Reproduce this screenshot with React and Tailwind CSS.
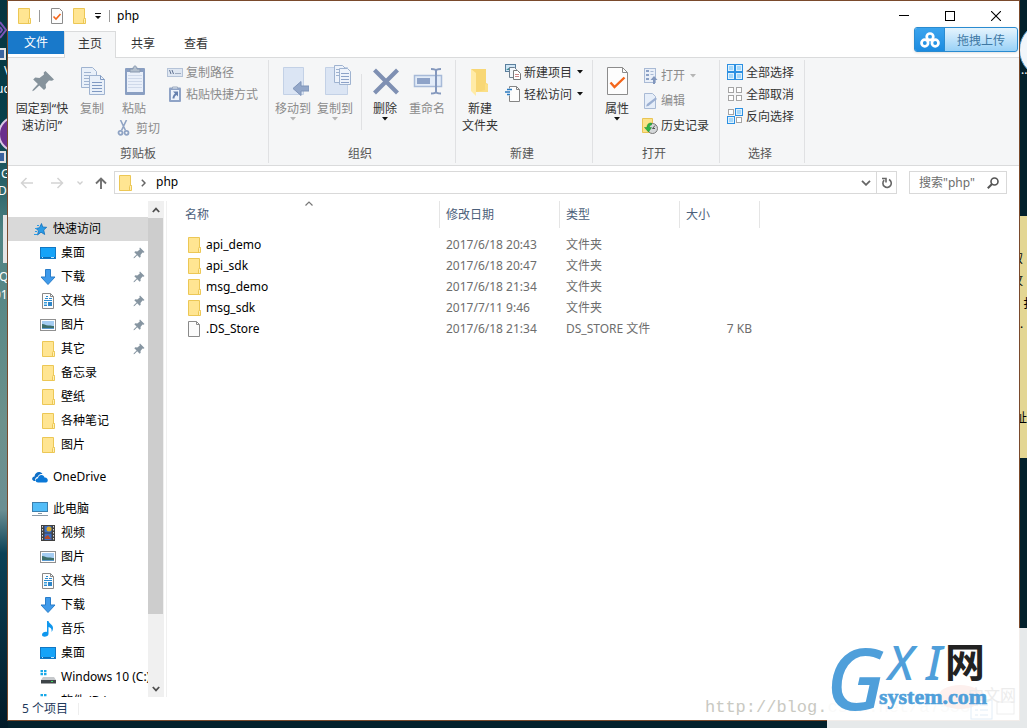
import React from "react";

const FONT = "font-['Noto_Sans','Noto_Sans_CJK_SC',sans-serif]";

/* ---------- shared icons ---------- */

function FolderIcon() {
  return (
    <svg width="16" height="16" viewBox="0 0 16 16" className="shrink-0" aria-hidden="true">
      <path d="M2.5 .5h11v10h1v5H2.5z" fill="#ffe592" stroke="#ecc755" />
      <path d="M12.5 15V11.5l1-1.5 1 1.5V15" fill="#fff0b5" stroke="#ecc755" />
    </svg>
  );
}

function PageIcon() {
  return (
    <svg width="16" height="16" viewBox="0 0 16 16" className="shrink-0" aria-hidden="true">
      <path d="M2.5 .5h8l3 3v12h-11z" fill="#fbfbfb" stroke="#8a8a8a" />
      <path d="M10.5 .5v3h3" fill="none" stroke="#8a8a8a" />
    </svg>
  );
}

function CheckPage({ large }) {
  return (
    <svg width={large ? 32 : 16} height={large ? 32 : 16} viewBox={large ? "0 0 32 32" : "0 0 16 16"} aria-hidden="true">
      {large ? (
        <g fill="none">
          <path d="M6.500 3.500h15l5 5v22h-20z" fill="#fdfdfd" stroke="#8c8c8c" />
          <path d="M21.500 3.500v5h5" stroke="#8c8c8c" />
          <path d="M9.500 18.500l4 4.500 10-9.500" stroke="#f4661b" strokeWidth="2.400" />
        </g>
      ) : (
        <g fill="none">
          <path d="M2.500 .5h8l3 3v12h-11z" fill="#fdfdfd" stroke="#8c8c8c" />
          <path d="M4.500 8.500l2.500 2.500 4.500-5" stroke="#f4661b" strokeWidth="1.600" />
        </g>
      )}
    </svg>
  );
}

function PinSmall() {
  return (
    <svg width="12" height="12" viewBox="0 0 12 12" aria-hidden="true">
      <path d="M7 .5l4.500 4.500-1 .8-1-.2-2 2.300.2 1.800-1 1L4.200 8.200 1.500 11l-1 .3.3-1L3.600 7.600 1.300 5.300l1-1 2 .2L6.800 2.500 6.400 1.300z" fill="#8695a1" />
    </svg>
  );
}

function Caret({ className = "" }) {
  return (
    <svg width="6" height="4" viewBox="0 0 6 4" className={className} aria-hidden="true">
      <path d="M0 0h6L3 3.500z" fill="currentColor" />
    </svg>
  );
}

/* ---------- ribbon icons ---------- */

const PinBig = () => (
  <svg width="32" height="32" viewBox="0 0 32 32" aria-hidden="true">
    <path d="M19.500 7l8.500 8.500-2 1.300-3-.3-3.300 3.800.3 3.700-2 2-4.700-4.500L8 26.500l-1.800.7.7-1.800 5-5.300-4.700-4.600 2-2 4.300.5L18 10.500l-.3-2z" fill="#86939c" />
  </svg>
);

const CopyIcon = () => (
  <svg width="32" height="32" viewBox="0 0 32 32" aria-hidden="true" stroke="#9fb3d0">
    <path d="M5.500 3.500h11l4 4v16h-15z" fill="#e9f0f9" />
    <path d="M8 8.500h7M8 11.500h7M8 14.500h7M8 17.500h7M8 20.500h7" fill="none" />
    <path d="M13.500 11.500h11l4 4v15h-15z" fill="#e9f0f9" />
    <path d="M24.500 11.500v4h4M16 18.500h10M16 21.500h10M16 24.500h10M16 27.500h10" fill="none" stroke="#7f99c2" />
  </svg>
);

const PasteIcon = () => (
  <svg width="32" height="32" viewBox="0 0 32 32" aria-hidden="true">
    <rect x="7" y="4" width="20" height="27" rx="1" fill="#8a9fc2" />
    <rect x="9" y="8" width="16" height="20" fill="#eaf0fa" />
    <path d="M10 11.500h14M10 14.500h14M10 17.500h14M10 20.500h14M10 23.500h14" stroke="#cfd9ea" />
    <path d="M12 8V5h3c0-4 4-4 4 0h3v3z" fill="#b3bfcd" stroke="#8797ae" />
  </svg>
);

const CutIcon = () => (
  <svg width="16" height="16" viewBox="0 0 16 16" fill="none" stroke="#8fa3c4" aria-hidden="true">
    <path d="M3.500 0l5 10.500M9.500 0L4.500 10.500" strokeWidth="1.600" />
    <circle cx="3.500" cy="12.800" r="2" strokeWidth="1.800" />
    <circle cx="9.500" cy="12.800" r="2" strokeWidth="1.800" />
  </svg>
);

const PathIcon = () => (
  <svg width="16" height="16" viewBox="0 0 16 16" aria-hidden="true">
    <rect x=".5" y="4.500" width="15" height="8" fill="#dfe7f2" stroke="#b5c3d8" />
    <path d="M2.500 6l1.500 4M5 6l1.500 4" stroke="#5f7191" />
    <path d="M8.500 9.500h1M10.500 9.500h1M12.500 9.500h1" stroke="#5f7191" />
  </svg>
);

const ShortcutIcon = () => (
  <svg width="16" height="16" viewBox="0 0 16 16" aria-hidden="true">
    <rect x="2" y="1.500" width="12" height="14.500" rx="1" fill="#8fa3c6" />
    <rect x="4" y="4" width="8" height="10" fill="#eef3fb" />
    <path d="M5.500 2.500V1h5v1.500" fill="#dfe6ee" stroke="#9aa9bf" />
    <path d="M6 5.500h5v5L9.500 9C8 10 7.500 11 7.500 12.500H5.500C5.500 10.500 6.500 8.500 8 7.500z" fill="#6680ae" />
  </svg>
);

const MoveIcon = () => (
  <svg width="32" height="32" viewBox="0 0 32 32" aria-hidden="true">
    <path d="M6.500 3.500h20v27h-20z" fill="#dbe5f4" stroke="#c3d1e6" />
    <path d="M16 24.500l8-7v4.500h8v5h-8v4.500z" fill="#93a7c9" stroke="#7f94b8" />
  </svg>
);

const CopyToIcon = () => (
  <svg width="32" height="32" viewBox="0 0 32 32" aria-hidden="true">
    <path d="M6.500 3.500h22v27h-22z" fill="#dbe5f4" stroke="#c3d1e6" />
    <path d="M15.500 1.500h8l3 3v14h-11z" fill="#eef3fb" stroke="#9fb3d0" />
    <path d="M17 5.500h5M17 8.500h5M17 11.500h5" stroke="#9fb3d0" />
    <path d="M20.500 4.500h8l3 3v13h-11z" fill="#eef3fb" stroke="#9fb3d0" />
    <path d="M22 9.500h8M22 12.500h8M22 15.500h8M22 18.500h8" stroke="#8ca2c8" />
  </svg>
);

const DeleteIcon = () => (
  <svg width="32" height="32" viewBox="0 0 32 32" aria-hidden="true">
    <path d="M5.500 6l23 23M28.500 6l-23 23" stroke="#7f90b3" strokeWidth="4.200" />
  </svg>
);

const RenameIcon = () => (
  <svg width="32" height="32" viewBox="0 0 32 32" aria-hidden="true">
    <rect x="3.500" y="11.500" width="27" height="11" fill="#e3ecf8" stroke="#a7bad8" strokeWidth="1.500" />
    <rect x="6" y="14" width="13" height="6" fill="#8ea3c8" />
    <path d="M25 6v22M20 5c3.500 0 5 .5 5 2 0-1.500 1.500-2 5-2M20 29.500c3.500 0 5-.5 5-2 0 1.500 1.500 2 5 2" fill="none" stroke="#8498bd" strokeWidth="2" />
  </svg>
);

const NewFolderIcon = () => (
  <svg width="32" height="32" viewBox="0 0 32 32" aria-hidden="true">
    <path d="M7 5h15v14l2 1v8H11z" fill="#f8d775" />
    <path d="M7 5l5 4v23l-5-5z" fill="#ffeba7" />
    <path d="M12 28h12v-7l-2-2-1 2v5z" fill="#fbdf86" />
  </svg>
);

const NewItemIcon = () => (
  <svg width="16" height="16" viewBox="0 0 16 16" aria-hidden="true">
    <rect x=".5" y=".5" width="10" height="7" fill="#cfe6f6" stroke="#5a7f9d" />
    <path d="M1 6l4-3 3 3" fill="#3f8f9a" />
    <path d="M4.500 3.500h5l2 2v8h-7z" fill="#f3f7fb" stroke="#6e7f8f" />
    <path d="M8.500 6.500h4l3 3v6h-7z" fill="#fff" stroke="#7a7a7a" />
    <path d="M10 10.500h4M10 12.500h4" stroke="#c88" />
  </svg>
);

const EasyIcon = () => (
  <svg width="16" height="16" viewBox="0 0 16 16" aria-hidden="true">
    <path d="M4.500 .5h7l3 3v12h-10z" fill="#fdfdfd" stroke="#858585" />
    <path d="M11.500 .5v3h3" fill="none" stroke="#858585" />
    <path d="M3 2.500h4v7H3z" fill="#f9fafb" />
    <path d="M2 3.500h5M0 6h5M2 8.500h3" stroke="#2a7ac0" strokeWidth="1.300" />
  </svg>
);

const OpenIcon = () => (
  <svg width="16" height="16" viewBox="0 0 16 16" aria-hidden="true">
    <rect x="2.500" y=".5" width="11" height="14" fill="#e9eff8" stroke="#a9bad5" />
    <path d="M4 3h3M4 7h3M4 11h3" stroke="#8ba1c6" strokeWidth="2" />
    <path d="M8.500 3.500h3M8.500 6.500h3" stroke="#a9bad5" />
    <path d="M11 16v-4H8.500L12 8l3.500 4H13v4z" fill="#8297bd" />
  </svg>
);

const EditIcon = () => (
  <svg width="16" height="16" viewBox="0 0 16 16" aria-hidden="true">
    <path d="M2.500 .5h8l3 3v12h-11z" fill="#e6eef9" stroke="#a9bad5" />
    <path d="M4 13.500l1-2.500 8.500-6.500 1.500 1.500L6.500 13z" fill="#9cb0d2" />
  </svg>
);

const HistoryIcon = () => (
  <svg width="16" height="16" viewBox="0 0 16 16" aria-hidden="true">
    <path d="M.5 .5h10v14H.5z" fill="#fbe28a" stroke="#e9c455" />
    <circle cx="10.500" cy="10.500" r="5" fill="#d5d8da" stroke="#787878" />
    <path d="M10.500 10.500L13 7.500M10.500 10.500h2.500" stroke="#555" />
    <path d="M9.500 5C6 5 5 7 5 9.500H2.500L6.500 14l3-4.500H7.500c0-1.500.5-2.500 2-2.500z" fill="#2fb344" stroke="#188a2d" strokeWidth=".5" />
  </svg>
);

function TilesIcon({ on }) {
  const spots = [[0, 0], [8, 0], [0, 8], [8, 8]];
  return (
    <svg width="16" height="16" viewBox="0 0 16 16" aria-hidden="true">
      {spots.map(([x, y], i) =>
        on.includes(i) ? (
          <g key={i}>
            <rect x={x + 0.5} y={y + 0.5} width="7" height="7" fill="#dff1fd" stroke="#2c90e2" />
            <rect x={x + 2} y={y + 2} width="4" height="4" fill="#a6d8fa" />
          </g>
        ) : (
          <rect key={i} x={x + 1.5} y={y + 1.5} width="5" height="5" fill="#fff" stroke="#a5a5a5" />
        )
      )}
    </svg>
  );
}

/* ---------- ribbon ---------- */

function BigButton({ icon, lines, caret, disabled, className }) {
  return (
    <button
      type="button"
      disabled={disabled}
      className={`flex flex-col items-center pt-1.5 leading-[17px] whitespace-nowrap ${disabled ? "text-[#8b8b8b]" : "text-[#333]"} ${className}`}
    >
      <span className="mb-1 block h-8 w-8">{icon}</span>
      {lines.map((line) => (
        <span key={line} className="block">{line}</span>
      ))}
      {caret && <Caret className={disabled ? "text-[#b5b5b5]" : "text-[#111]"} />}
    </button>
  );
}

function SmallButton({ icon, label, caret, disabled, className = "h-[22px]" }) {
  return (
    <button
      type="button"
      disabled={disabled}
      className={`flex items-center gap-[3px] whitespace-nowrap leading-[17px] ${disabled ? "text-[#8b8b8b]" : "text-[#333]"} ${className}`}
    >
      {icon}
      <span>{label}</span>
      {caret && <Caret className={disabled ? "ml-0.5 text-[#b5b5b5]" : "ml-0.5 text-[#111]"} />}
    </button>
  );
}

function Group({ title, children, className }) {
  return (
    <section aria-label={title} className={`my-0.5 flex shrink-0 flex-col border-r border-[#e0e1e3] ${className}`}>
      <div className="-mt-0.5 flex flex-1 items-start">{children}</div>
      <h2 className="pr-1 pb-px text-center leading-[17px] text-[#555]">{title}</h2>
    </section>
  );
}

function Ribbon() {
  return (
    <div className="flex h-[108px] shrink-0 overflow-hidden border-b border-[#dadbdc] bg-[#f5f6f7]">
      <Group title="剪贴板" className="w-[261px] pl-1">
        <BigButton className="w-[60px]" icon={<PinBig />} lines={["固定到“快", "速访问”"]} />
        <BigButton className="w-10" icon={<CopyIcon />} lines={["复制"]} disabled />
        <div className="w-[55px]">
          <BigButton className="w-11" icon={<PasteIcon />} lines={["粘贴"]} disabled />
          <SmallButton className="ml-[5px] h-[22px]" icon={<CutIcon />} label="剪切" disabled />
        </div>
        <div className="pt-[3px]">
          <SmallButton icon={<PathIcon />} label="复制路径" disabled />
          <SmallButton icon={<ShortcutIcon />} label="粘贴快捷方式" disabled />
        </div>
      </Group>
      <Group title="组织" className="w-[187px]">
        <BigButton className="ml-[3px] w-[42px]" icon={<MoveIcon />} lines={["移动到"]} caret disabled />
        <BigButton className="w-[42px]" icon={<CopyToIcon />} lines={["复制到"]} caret disabled />
        <div className="mt-4 mr-1 ml-[5px] h-14 w-px bg-[#e0e1e3]" />
        <BigButton className="w-[38px]" icon={<DeleteIcon />} lines={["删除"]} caret />
        <BigButton className="w-[46px]" icon={<RenameIcon />} lines={["重命名"]} disabled />
      </Group>
      <Group title="新建" className="w-[137px]">
        <BigButton className="w-12" icon={<NewFolderIcon />} lines={["新建", "文件夹"]} />
        <div className="pt-[3px] pl-px">
          <SmallButton icon={<NewItemIcon />} label="新建项目" caret />
          <SmallButton icon={<EasyIcon />} label="轻松访问" caret />
        </div>
      </Group>
      <Group title="打开" className="w-[127px]">
        <BigButton className="w-12" icon={<CheckPage large />} lines={["属性"]} caret />
        <div className="pt-[5px] pl-px">
          <SmallButton className="h-[25px]" icon={<OpenIcon />} label="打开" caret disabled />
          <SmallButton className="h-[25px]" icon={<EditIcon />} label="编辑" disabled />
          <SmallButton className="h-[25px]" icon={<HistoryIcon />} label="历史记录" />
        </div>
      </Group>
      <Group title="选择" className="w-[85px]">
        <div className="pt-[3px] pl-[7px]">
          <SmallButton icon={<TilesIcon on={[0, 1, 2, 3]} />} label="全部选择" />
          <SmallButton icon={<TilesIcon on={[]} />} label="全部取消" />
          <SmallButton icon={<TilesIcon on={[1, 2]} />} label="反向选择" />
        </div>
      </Group>
    </div>
  );
}

/* ---------- title bar and tabs ---------- */

function TitleBar() {
  return (
    <header className="flex h-[30px] shrink-0 items-center">
      <div className="flex flex-1 items-center pl-2">
        <FolderIcon />
        <span className="ml-[7px] h-3 w-px bg-[#9a9a9a]" />
        <button type="button" aria-label="属性" className="ml-[9px]"><CheckPage /></button>
        <button type="button" aria-label="新建文件夹" className="ml-[6px]"><FolderIcon /></button>
        <button type="button" aria-label="自定义快速访问工具栏" className="ml-[7px]">
          <svg width="8" height="8" viewBox="0 0 8 8" aria-hidden="true">
            <path d="M1 1h6v1H1zM1 4h6L4 7z" fill="#111" />
          </svg>
        </button>
        <span className="ml-[7px] h-3 w-px bg-[#9a9a9a]" />
        <h1 className="ml-[7px] text-black">php</h1>
      </div>
      <div className="flex h-full">
        <button type="button" aria-label="最小化" className="flex w-[46px] items-center justify-center">
          <svg width="10" height="10" viewBox="0 0 10 10"><path d="M0 4.500h10" stroke="#000" /></svg>
        </button>
        <button type="button" aria-label="最大化" className="flex w-[46px] items-center justify-center">
          <svg width="10" height="10" viewBox="0 0 10 10"><rect x=".5" y=".5" width="9" height="9" fill="none" stroke="#000" /></svg>
        </button>
        <button type="button" aria-label="关闭" className="flex w-[46px] items-center justify-center">
          <svg width="10" height="10" viewBox="0 0 10 10"><path d="M0 0l10 10M10 0L0 10" stroke="#000" strokeWidth="1.100" /></svg>
        </button>
      </div>
    </header>
  );
}

function Tabs() {
  return (
    <nav aria-label="功能区" className="flex h-[27px] shrink-0 text-[#333]">
      <div className="border-b border-[#dadbdc]">
        <button type="button" className="h-[23px] w-14 bg-[#1979ca] text-white">文件</button>
      </div>
      <button type="button" className="w-[52px] border-x border-t border-[#dadbdc] bg-[#f5f6f7] pb-0.5">主页</button>
      <button type="button" className="w-[54px] border-b border-[#dadbdc] pb-px">共享</button>
      <button type="button" className="w-[52px] border-b border-[#dadbdc] pb-px">查看</button>
      <div className="flex-1 border-b border-[#dadbdc]" />
    </nav>
  );
}

function UploadButton() {
  return (
    <button
      type="button"
      className="absolute top-[26px] right-px flex h-[25px] w-[104px] overflow-hidden rounded-[3px] border border-[#2a8bd0] bg-linear-to-b from-[#e6f4fd] to-[#98d1f7] text-[#3d77a3] shadow-sm"
    >
      <span className="flex h-full w-[30px] items-center justify-center border-r border-[#2a8bd0] bg-linear-to-b from-[#3aa4ee] to-[#1b8be0]">
        <svg width="20" height="16" viewBox="0 0 20 16" fill="none" stroke="#fff" strokeWidth="2.700" aria-hidden="true">
          <circle cx="10" cy="4.800" r="3.300" />
          <circle cx="4.800" cy="11" r="3.300" />
          <circle cx="15.200" cy="11" r="3.300" />
          <path d="M7.500 9l2.500-1.500L12.500 9" strokeWidth="1.800" />
        </svg>
      </span>
      <span className="flex h-full flex-1 items-center justify-center pt-0.5">拖拽上传</span>
    </button>
  );
}

/* ---------- address bar ---------- */

function AddressBar() {
  return (
    <div className="flex h-[35px] shrink-0 items-start pt-[5px] pr-3">
      <div className="flex h-[23px] w-[106px] items-center">
        <button type="button" aria-label="后退" className="ml-3 w-[14px]">
          <svg width="14" height="12" viewBox="0 0 14 12" fill="none" stroke="#d3d3d3" strokeWidth="1.500"><path d="M13 6H2M6.500 1L1.500 6l5 5" /></svg>
        </button>
        <button type="button" aria-label="前进" className="ml-4 w-[14px]">
          <svg width="14" height="12" viewBox="0 0 14 12" fill="none" stroke="#d3d3d3" strokeWidth="1.500"><path d="M1 6h11M7.500 1l5 5-5 5" /></svg>
        </button>
        <button type="button" aria-label="最近浏览的位置" className="ml-[13px] w-[6px]">
          <svg width="6" height="4" viewBox="0 0 6 4" fill="none" stroke="#cfcfcf" strokeWidth="1.300"><path d="M.5 .5L3 3 5.500 .5" /></svg>
        </button>
        <button type="button" aria-label="上移" className="ml-3 w-3">
          <svg width="12" height="12" viewBox="0 0 12 12" fill="none" stroke="#707070" strokeWidth="1.900"><path d="M6 12V1.500M1 6.500l5-5 5 5" /></svg>
        </button>
      </div>
      <div className="flex h-[23px] flex-1 items-center border border-[#d9d9d9]">
        <span className="ml-0.5 flex"><FolderIcon /></span>
        <svg width="5" height="8" viewBox="0 0 5 8" className="ml-2" fill="none" stroke="#666" strokeWidth="1.500" aria-hidden="true"><path d="M.8 .8L4 4 .8 7.200" /></svg>
        <a href="#php" className="ml-[10px] flex-1 pb-px text-black">php</a>
        <button type="button" aria-label="展开" className="flex w-5 items-center justify-center">
          <svg width="10" height="6" viewBox="0 0 10 6" fill="none" stroke="#666" strokeWidth="1.800"><path d="M1 .8l4 4 4-4" /></svg>
        </button>
        <button type="button" aria-label="刷新" className="flex h-full w-5 items-center justify-center border-l border-[#d9d9d9]">
          <svg width="12" height="12" viewBox="0 0 12 12" fill="none" stroke="#666" strokeWidth="1.600"><path d="M8 2.500A4.200 4.200 0 1 1 3.200 3.200" /><path d="M1 1.500h4v4" /></svg>
        </button>
      </div>
      <label className="ml-3 flex h-[23px] w-[98px] items-center border border-[#d9d9d9]">
        <input aria-label="搜索" placeholder={'搜索"php"'} className="min-w-0 flex-1 bg-transparent pl-[9px] outline-none placeholder:text-[#6d6d6d]" />
        <svg width="12" height="12" viewBox="0 0 12 12" className="mr-[7px] shrink-0" fill="none" stroke="#555" strokeWidth="1.600" aria-hidden="true">
          <circle cx="7.500" cy="4.500" r="3.500" />
          <path d="M5 7L.8 11.200" strokeWidth="2" />
        </svg>
      </label>
    </div>
  );
}

/* ---------- navigation pane ---------- */

const treeIcons = {
  star: (
    <svg width="16" height="16" viewBox="0 0 16 16" aria-hidden="true">
      <path d="M9.500 2.500l1.200 3.500 4 .3-3 2.700 1 4.500-3.700-2.300-3.500 2.800 1-4.200L4 7.500l3.500-.8z" fill="#2a9be6" stroke="#1471bd" strokeWidth=".8" />
      <path d="M5 4.500h2M3 7.500h2M3 10.500h2M2 13.500h3" stroke="#2a9be6" />
    </svg>
  ),
  desktop: (
    <svg width="16" height="16" viewBox="0 0 16 16" aria-hidden="true">
      <rect x=".5" y="2.500" width="15" height="11" fill="#16a3f8" stroke="#1277c3" />
      <path d="M1 12.500h14" stroke="#0c6cb5" />
      <path d="M2 12.500h1M11 12.500h3" stroke="#bfe3fb" />
    </svg>
  ),
  download: (
    <svg width="16" height="16" viewBox="0 0 16 16" aria-hidden="true">
      <path d="M5.500 .5h5v7.500h4.500L8 15.500 1 8h4.500z" fill="#3f9aea" stroke="#2a7dc9" />
    </svg>
  ),
  doc: (
    <svg width="16" height="16" viewBox="0 0 16 16" aria-hidden="true">
      <path d="M2.500 .5h8l3 3v12h-11z" fill="#fcfcfc" stroke="#888" />
      <path d="M10.500 .5v3h3" fill="none" stroke="#888" />
      <path d="M6 3.500h2M5 5.500h3M9 5.500h3M4 7.500h8M4 12.500h3" stroke="#2c8bd0" />
      <path d="M4 9.500h3M4 11h3" stroke="#3aa0dc" />
      <path d="M8 9h4v4H8z" fill="#2f86c8" />
    </svg>
  ),
  picture: (
    <svg width="16" height="16" viewBox="0 0 16 16" aria-hidden="true">
      <rect x=".5" y="2.500" width="15" height="11" fill="#fff" stroke="#909090" />
      <rect x="2" y="4" width="12" height="8" fill="#a5cdf2" />
      <path d="M2 7c3 0 4 2 7 1.500 2 0 3 .5 5 .5v2H2z" fill="#3d6f6a" />
      <path d="M2 11h12v1H2z" fill="#5b9bd0" />
    </svg>
  ),
  folder: <FolderIcon />,
  cloud: (
    <svg width="16" height="16" viewBox="0 0 16 16" aria-hidden="true">
      <path d="M2 12C-1 11 0 7.500 2.500 7.500 3 3 8 1.500 10.500 5 8 4.500 6 6 5.500 8 3 8.500 2.500 11 4 12z" fill="#0f6fc6" />
      <path d="M6 13.500c-3 0-3-4 0-4.200C6.500 5 12 5 12.500 8.500c3.500-.5 4.500 4.500 1.500 5z" fill="#0a78d7" />
    </svg>
  ),
  pc: (
    <svg width="16" height="16" viewBox="0 0 16 16" aria-hidden="true">
      <rect x=".5" y="1.500" width="15" height="9" fill="#52bdf8" stroke="#3b7fae" />
      <path d="M6 12.500h4M0 14.500h16" stroke="#8b9aa6" />
    </svg>
  ),
  video: (
    <svg width="16" height="16" viewBox="0 0 16 16" aria-hidden="true">
      <rect x="1" y="0" width="14" height="16" fill="#404040" />
      <path d="M2.500 1v14M13.500 1v14" stroke="#ddd" strokeDasharray="1.500 1.500" />
      <rect x="4.500" y="1" width="7" height="6.500" fill="#3d6ec4" />
      <rect x="4.500" y="8.500" width="7" height="6.500" fill="#3d6ec4" />
      <circle cx="9" cy="4" r="2.500" fill="#d9a92c" />
      <path d="M5 12l3-2 3 4H5z" fill="#b34a2b" />
    </svg>
  ),
  music: (
    <svg width="16" height="16" viewBox="0 0 16 16" aria-hidden="true">
      <path d="M7 0h1.500c.5 3 4.500 3.500 4.500 7 0 2-.8 3-1.500 4 .5-3-.5-4.500-3-5v7c0 3-6.500 4-6.500.8C2 11.500 5 10.500 7 11z" fill="#0f97ee" />
    </svg>
  ),
  drive: (
    <svg width="16" height="16" viewBox="0 0 16 16" aria-hidden="true">
      <path d="M.5 1h2.500v2.200H.5zM4 1h2.500v2.200H4zM.5 4h2.500v2.200H.5zM4 4h2.500v2.200H4z" fill="#18a8e8" />
      <path d="M3 8h11l2 3H1z" fill="#c6c9cc" />
      <path d="M1 11h15v3.500H1z" fill="#3e4448" />
      <path d="M11 12.500h2" stroke="#40e060" />
    </svg>
  ),
};

const quickItems = [
  ["desktop", "桌面", true],
  ["download", "下载", true],
  ["doc", "文档", true],
  ["picture", "图片", true],
  ["folder", "其它", true],
  ["folder", "备忘录", false],
  ["folder", "壁纸", false],
  ["folder", "各种笔记", false],
  ["folder", "图片", false],
];

const pcItems = [
  ["video", "视频"],
  ["picture", "图片"],
  ["doc", "文档"],
  ["download", "下载"],
  ["music", "音乐"],
  ["desktop", "桌面"],
  ["drive", "Windows 10 (C:)"],
  ["drive", "软件 (D:)"],
];

function TreeItem({ icon, label, pinned, root, selected }) {
  return (
    <li>
      <a
        href="#item"
        className={`flex h-6 items-center gap-[5px] whitespace-nowrap text-black ${root ? "pl-6" : "pl-8"} ${selected ? "bg-[#d9d9d9]" : ""}`}
      >
        <span className="shrink-0">{treeIcons[icon]}</span>
        <span className="flex-1">{label}</span>
        {pinned && <span className="mr-[3px]"><PinSmall /></span>}
      </a>
    </li>
  );
}

function Sidebar() {
  return (
    <aside className="flex w-[159px] shrink-0 border-r border-[#f0f0f0]">
      <div className="w-[140px] overflow-hidden pt-4">
        <ul className="mb-2">
          <TreeItem icon="star" label="快速访问" root selected />
          {quickItems.map(([icon, label, pinned], i) => (
            <TreeItem key={i} icon={icon} label={label} pinned={pinned} />
          ))}
        </ul>
        <ul className="mb-2">
          <TreeItem icon="cloud" label="OneDrive" root />
        </ul>
        <ul>
          <TreeItem icon="pc" label="此电脑" root />
          {pcItems.map(([icon, label], i) => (
            <TreeItem key={i} icon={icon} label={label} />
          ))}
        </ul>
      </div>
      <div className="flex w-4 flex-col bg-[#f0f0f0]" aria-hidden="true">
        <div className="flex h-[17px] w-[15px] items-center justify-center">
          <svg width="8" height="6" viewBox="0 0 8 6" fill="none" stroke="#505050" strokeWidth="1.800"><path d="M.8 5L4 1.600 7.200 5" /></svg>
        </div>
        <div className="w-[15px] grow-6 bg-[#cdcdcd]" />
        <div className="grow" />
        <div className="flex h-[17px] w-[15px] items-center justify-center">
          <svg width="8" height="6" viewBox="0 0 8 6" fill="none" stroke="#505050" strokeWidth="1.800"><path d="M.8 1L4 4.400 7.200 1" /></svg>
        </div>
      </div>
    </aside>
  );
}

/* ---------- file list ---------- */

const files = [
  ["api_demo", "2017/6/18 20:43", "文件夹", ""],
  ["api_sdk", "2017/6/18 20:47", "文件夹", ""],
  ["msg_demo", "2017/6/18 21:34", "文件夹", ""],
  ["msg_sdk", "2017/7/11 9:46", "文件夹", ""],
  [".DS_Store", "2017/6/18 21:34", "DS_STORE 文件", "7 KB"],
];

function HeadCell({ label, sorted, className }) {
  return (
    <th scope="col" className={`p-0 pb-1.5 text-left font-normal text-[#4c607a] ${className}`}>
      <div className={`relative flex h-[27px] items-center border-r border-[#e5e5e5] ${sorted ? "pl-[10px]" : "pl-1.5"}`}>
        {label}
        {sorted && (
          <svg width="8" height="5" viewBox="0 0 8 5" className="absolute top-0 left-[130px]" fill="none" stroke="#777" strokeWidth="1.200" aria-hidden="true"><path d="M.5 4.500L4 1l3.500 3.500" /></svg>
        )}
      </div>
    </th>
  );
}

function FileList() {
  return (
    <main className="min-w-0 flex-1 overflow-hidden pl-2">
      <table className="table-fixed border-collapse whitespace-nowrap">
        <thead>
          <tr>
            <HeadCell label="名称" sorted className="w-[265px]" />
            <HeadCell label="修改日期" className="w-[120px]" />
            <HeadCell label="类型" className="w-[120px]" />
            <HeadCell label="大小" className="w-20" />
          </tr>
        </thead>
        <tbody className="text-[#6d6d6d]">
          {files.map(([name, date, type, size]) => (
            <tr key={name} className="h-[21px]">
              <td className="p-0 pl-[11px] text-black">
                <span className="flex items-center gap-1">
                  {size ? <PageIcon /> : <FolderIcon />}
                  {name}
                </span>
              </td>
              <td className="p-0 pl-1.5">{date}</td>
              <td className="p-0 pl-1.5">{type}</td>
              <td className="p-0 pr-2 text-right">{size}</td>
            </tr>
          ))}
        </tbody>
      </table>
    </main>
  );
}

/* ---------- desktop behind the window ---------- */

function Desktop() {
  return (
    <div aria-hidden="true" className="absolute inset-0 overflow-hidden bg-[#03212c]">
      <div className="absolute inset-y-0 left-0 w-2 overflow-hidden bg-[linear-gradient(#06343f_0%,#06404b_18%,#4f8383_32%,#6c918c_58%,#6b8f93_70%,#0b4156_76%,#021a28_100%)] leading-4 text-white">
        <svg width="8" height="20" viewBox="0 0 8 20" className="absolute top-5 left-0" fill="none" stroke="#7a55b8" strokeWidth="2"><path d="M0 2l6 8-6 8M0 7l2 3-2 3" /></svg>
        <div className="absolute top-12 -left-1 h-3 w-[10px] border-2 border-[#e3e3e3] bg-[#3a64a0]" />
        <span className="absolute top-[63px] left-1">V</span>
        <span className="absolute top-[81px] -left-1">uc</span>
        <div className="absolute top-[116px] -left-0.5 h-9 w-9 rounded-full border-2 border-[#d9c8e4] bg-[#6b2f8c]" />
        <div className="absolute top-[151px] -left-1 h-3 w-[10px] border-2 border-[#e3e3e3] bg-[#3a64a0]" />
        <span className="absolute top-[166px] left-px">G</span>
        <span className="absolute top-[183px] -left-0.5">D</span>
        <div className="absolute top-[215px] left-[3px] h-12 w-4 bg-[#e5e5e5]" />
        <span className="absolute top-[269px] -left-px">Q</span>
        <span className="absolute top-[287px] -left-1.5">01</span>
      </div>
      <div className="absolute inset-y-0 right-0 w-2 overflow-hidden leading-4">
        <div className="absolute top-[22px] left-0 h-14 w-14 rounded-full border border-[#4a9bd6] bg-[#f1f6fa]" />
        <span className="absolute top-[62px] left-0.5 text-white">...</span>
        <div className="absolute inset-x-0 top-[216px] h-[242px] bg-[#e3d693] text-black">
          <span className="absolute top-[35px] -left-2">叙</span>
          <span className="absolute top-[57px] -left-2">攻</span>
          <span className="absolute top-[80px] left-1">扌</span>
          <span className="absolute top-[100px] left-px">.</span>
          <span className="absolute top-[194px] -left-1">址</span>
        </div>
      </div>
    </div>
  );
}

function Watermark() {
  return (
    <div className="pointer-events-none absolute right-0 bottom-0 h-[100px] w-[322px] overflow-hidden">
      <span className="absolute bottom-2 left-0 font-['Liberation_Mono',monospace] text-[17px] leading-6 whitespace-nowrap text-[#c9c9c2]">http://blog.csdn.net/a7553</span>
      <div className="absolute inset-y-0 right-0 w-[200px] bg-white/90">
        <svg width="200" height="100" viewBox="0 0 200 100" role="img" aria-label="GXI网 system.com">
          <ellipse cx="133" cy="69" rx="22" ry="12" fill="#fdf0ee" />
          <g fill="none" stroke="#e2edf7">
            <rect x="144" y="72" width="21" height="19" />
            <path d="M148 77h3M153 77h8M148 82h3M153 82h8M148 87h3M153 87h8" />
            <rect x="170" y="74" width="17" height="12" stroke="#eeeeee" />
          </g>
          <text x="141" y="73" fontFamily="Noto Sans CJK SC, sans-serif" fontSize="16" fill="#ececec">中文网</text>
          <g fill="#4f9fda">
            <text x="-1" y="82" fontFamily="Noto Sans, sans-serif" fontStyle="italic" fontWeight="500" fontSize="86">G</text>
            <g fontFamily="Noto Sans, sans-serif" fontStyle="italic" fontWeight="500" fontSize="47">
              <text x="61" y="52">X</text>
              <text x="99" y="52">I</text>
            </g>
            <text x="52" y="76" fontFamily="Liberation Serif, serif" fontWeight="700" fontSize="22" stroke="#4f9fda" strokeWidth=".6">system.com</text>
          </g>
          <text x="118" y="49" fontFamily="Noto Sans CJK SC, sans-serif" fontWeight="700" fontSize="40" fill="#222">网</text>
        </svg>
      </div>
    </div>
  );
}

export default function App() {
  return (
    <div className={`relative flex h-screen overflow-hidden px-[7px] pb-[7px] text-xs ${FONT}`}>
      <Desktop />
      <div className="relative flex min-w-0 flex-1 flex-col border border-[#7a4a2c] bg-white">
        <TitleBar />
        <Tabs />
        <UploadButton />
        <Ribbon />
        <AddressBar />
        <div className="flex min-h-0 flex-1">
          <Sidebar />
          <FileList />
        </div>
        <footer className="flex h-[23px] shrink-0 items-center pl-[14px] text-[#1e395b]">
          <span>5 个项目</span>
          <span className="ml-[10px] h-3 w-px bg-[#eee]" />
        </footer>
      </div>
      <Watermark />
    </div>
  );
}
